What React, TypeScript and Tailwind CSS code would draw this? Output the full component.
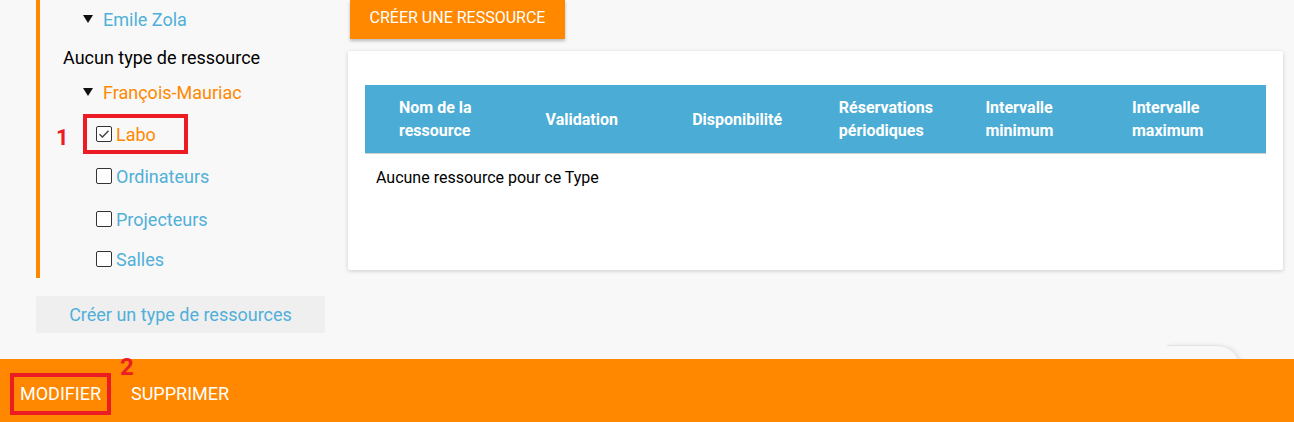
import React from "react";

const bleu = "text-[#4fb0d9]";

function Triangle() {
  return (
    <svg width="10" height="8" viewBox="0 0 10 8" className="mr-[10px]">
      <path d="M0 0 H10 L5 8 Z" fill="#111" />
    </svg>
  );
}

function CaseACocher({ coche = false }: { coche?: boolean }) {
  return (
    <span className="mr-[4px] flex h-[16px] w-[16px] shrink-0 items-center justify-center rounded-[2px] border-[1.5px] border-[#333] bg-white">
      {coche && (
        <svg width="12" height="10" viewBox="0 0 12 10">
          <path d="M1.5 5.2 L4.5 8 L10.5 1.8" fill="none" stroke="#444" strokeWidth="1.5" />
        </svg>
      )}
    </span>
  );
}

function Arbre() {
  return (
    <div className="w-[325px] shrink-0">
      <div className="ml-[36px] h-[278px] border-l-4 border-[#ff8800]">
        <div className={`flex h-[38px] items-center pl-[43px] ${bleu}`}>
          <Triangle />
          Emile Zola
        </div>
        <div className="flex h-[38px] items-center pl-[23px] text-black">
          Aucun type de ressource
        </div>
        <div className="flex h-[32px] items-center pl-[43px] text-[#ff8800]">
          <Triangle />
          François-Mauriac
        </div>
        <div className="relative mt-[6px] h-[40px]">
          <span className="absolute left-[16px] top-[7px] text-[22px] font-bold text-[#ec1c24]">1</span>
          <div className="ml-[43px] flex h-[40px] w-[105px] items-center border-4 border-[#ec1c24] pl-[9px] text-[#ff8800]">
            <CaseACocher coche />
            Labo
          </div>
        </div>
        <div className={`flex h-[44px] items-center pl-[56px] ${bleu}`}>
          <CaseACocher />
          Ordinateurs
        </div>
        <div className={`flex h-[42px] items-center pl-[56px] ${bleu}`}>
          <CaseACocher />
          Projecteurs
        </div>
        <div className={`flex h-[38px] items-center pl-[56px] ${bleu}`}>
          <CaseACocher />
          Salles
        </div>
      </div>
      <div className="ml-[36px] mt-[18px] flex h-[37px] w-[289px] items-center justify-center rounded-[2px] bg-[#efefef] text-[#4fb0d9]">
        Créer un type de ressources
      </div>
    </div>
  );
}

const colonnes: [string, string?][] = [
  ["Nom de la", "ressource"],
  ["Validation"],
  ["Disponibilité"],
  ["Réservations", "périodiques"],
  ["Intervalle", "minimum"],
  ["Intervalle", "maximum"],
];

function Tableau() {
  return (
    <div className="ml-[23px] w-[935px]">
      <button className="ml-[2px] h-[39px] w-[215px] bg-[#ff8800] pb-[3px] text-[16px] uppercase text-white shadow-[0_2px_3px_rgba(0,0,0,0.25)]">
        Créer une ressource
      </button>
      <div className="mt-[12px] h-[219px] rounded-[2px] bg-white px-[17px] pt-[34px] shadow-[0_1px_4px_rgba(0,0,0,0.18)]">
        <div className="flex h-[69px] items-center overflow-hidden border-b border-[#cfcfcf] bg-[#4badd5] pl-[34px] text-[16px] font-bold leading-[23px] text-white">
          {colonnes.map(([a, b], i) => (
            <div key={i} className="w-[146.6px] shrink-0">
              <div>{a}</div>
              {b && <div>{b}</div>}
            </div>
          ))}
        </div>
        <p className="mt-[12px] pl-[11px] text-[16px] text-black">Aucune ressource pour ce Type</p>
      </div>
    </div>
  );
}

export default function App() {
  return (
    <div className="relative flex h-[422px] w-[1294px] flex-col overflow-hidden bg-[#f8f8f8] font-['Roboto',sans-serif] text-[18px]">
      <div className="flex flex-1">
        <Arbre />
        <Tableau />
      </div>
      <div className="absolute left-[1167px] top-[345px] h-[30px] w-[72px] rounded-tr-[22px] border-t border-[#e2e2e2] shadow-[3px_0_4px_rgba(0,0,0,0.08)]" />
      <div className="relative z-10 flex h-[63px] items-center bg-[#ff8800] pt-[6px] text-white">
        <span className="absolute left-[120px] top-[-10px] text-[24px] font-bold text-[#ec1c24]">2</span>
        <div className="ml-[10px] flex h-[42px] items-center border-4 border-[#ec1c24] px-[6px] uppercase">
          Modifier
        </div>
        <span className="ml-[20px] uppercase">Supprimer</span>
      </div>
    </div>
  );
}
